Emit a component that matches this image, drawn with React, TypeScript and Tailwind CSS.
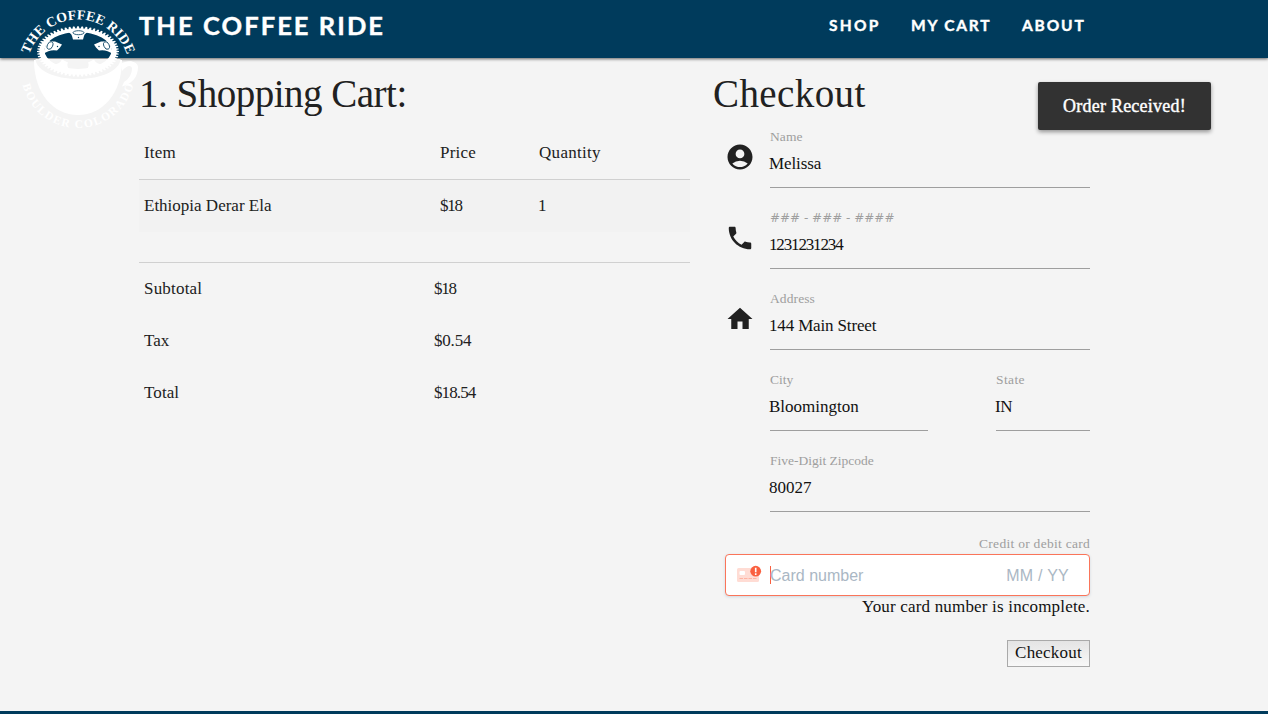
import type { ReactNode } from "react";
import { MdAccountCircle, MdPhone, MdHome } from "react-icons/md";

const serif = "font-['Liberation_Serif',serif]";

function Logo() {
  const count = 60;
  const teeth = Array.from({ length: count }, (_, i) => (i * 2 * Math.PI) / count);
  const ring = teeth
    .map((t) => {
      const pt = (a: number, rx: number, ry: number) =>
        `${(78 + rx * Math.cos(a)).toFixed(2)} ${(51.5 + ry * Math.sin(a)).toFixed(2)}`;
      return `L${pt(t - 0.04, 38.5, 23)} L${pt(t - 0.018, 41, 25.2)} L${pt(t + 0.018, 41, 25.2)} L${pt(t + 0.04, 38.5, 23)}`;
    })
    .join(" ")
    .replace("L", "M");
  return (
    <svg width="139" height="134" viewBox="0 0 139 134" className="block">
      <defs>
        <path id="arc-top" d="M26.500 71A51.500 51.500 0 0 1 129.500 71" />
        <path id="arc-bottom" d="M21 71A57 57 0 0 0 135 71" />
      </defs>
      <path d="M34 60C34 93 53 115 78 115C103 115 122 93 122 60Z" fill="#fff" />
      <path fillRule="evenodd" fill="#fff" d="M121 64C127 59 138 61 138 67C138 77 132 84 122 86.500L124 82C129 79 132 74 132 68C131 65 127 65 122 71Z" />
      <path d="M35.500 59H120.500C120 70 102 79 78 79C54 79 36 70 35.500 59Z" fill="#f4f4f4" />
      <path fillRule="evenodd" fill="#fff" d={`${ring}Z M44.500 50.500A33.500 18.500 0 0 0 111.500 50.500A33.500 18.500 0 0 0 44.500 50.500Z`} />
      <g fill="#fff">
        <path d="M65 31.500Q71 32 72 36L73 39.500H83L84 36Q85 32 91 31.500L78 29Z" />
        <path d="M47 40Q51 42 55 41.500L62 44.500L60 47.500L57 50.500Q50 49 43 54Z" />
        <path d="M109 40Q105 42 101 41.500L94 44.500L96 47.500L99 50.500Q106 49 113 54Z" />
        <path d="M52 65.500Q60 64 62 59.500L68 62.500Q66 66 70 70.500Z" />
        <path d="M104 65.500Q96 64 94 59.500L88 62.500Q90 66 86 70.500Z" />
      </g>
      <g fill="none" stroke="#003b5c" strokeWidth="0.8">
        <ellipse cx="78.500" cy="32.700" rx="5.500" ry="2" />
        <ellipse cx="50" cy="45.500" rx="2.600" ry="4" transform="rotate(25 50 45.500)" />
        <ellipse cx="106.500" cy="45.500" rx="2.600" ry="4" transform="rotate(-25 106.500 45.500)" />
      </g>
      <g fill="#003b5c">
        <circle cx="78.500" cy="37.500" r="0.700" />
        <circle cx="57.500" cy="46.500" r="0.700" />
        <circle cx="99" cy="46.500" r="0.700" />
      </g>
      <g className={`${serif} font-bold`} fill="#fff">
        <text fontSize="13.8">
          <textPath href="#arc-top" startOffset="17" textLength="128">THE COFFEE RIDE</textPath>
        </text>
        <text fontSize="11.5">
          <textPath href="#arc-bottom" startOffset="14" textLength="151">BOULDER COLORADO</textPath>
        </text>
      </g>
    </svg>
  );
}

type FieldProps = { label: string; value: string; valueClass?: string; labelClass?: string; className?: string };

function Field({ label, value, valueClass = "", labelClass = "", className = "" }: FieldProps) {
  return (
    <div className={`h-[58px] border-b border-[#9e9e9e] ${className}`}>
      <div className={`h-[14px] whitespace-nowrap text-[13.5px] leading-[14px] text-[#9e9e9e] ${labelClass}`}>{label}</div>
      <div className={`mt-[10px] -ml-px h-5 whitespace-nowrap text-[17px] leading-5 text-[#111] ${valueClass}`}>{value}</div>
    </div>
  );
}

function Row({ icon, children }: { icon?: ReactNode; children: ReactNode }) {
  return (
    <div className="mb-[23px] flex">
      <div className="w-[57px] pl-[11.5px] pt-[12px] text-[30px]">{icon}</div>
      <div className="flex w-[320px] justify-between">{children}</div>
    </div>
  );
}

const totals = [
  { name: "Subtotal", price: "$18", nameClass: "tracking-[0.2px]", priceClass: "tracking-[-1.2px]" },
  { name: "Tax", price: "$0.54", nameClass: "tracking-[0px]", priceClass: "tracking-[-0.2px]" },
  { name: "Total", price: "$18.54", nameClass: "tracking-[0.1px]", priceClass: "tracking-[-0.9px]" },
];

export default function App() {
  return (
    <div className={`relative flex h-[714px] w-[1268px] flex-col overflow-hidden bg-[#f4f4f4] text-[17px] text-[#212121] ${serif}`}>
      <header className="flex h-[58px] shrink-0 items-start bg-[#003b5c] pl-[139px] font-['Lato',sans-serif] font-bold text-white shadow-[0_1px_3px_rgba(0,0,0,0.6)]">
        <div className="w-[690px] whitespace-nowrap pt-[9px] text-[25.5px] leading-8 tracking-[2.05px] [-webkit-text-stroke:0.4px_white]">THE COFFEE RIDE</div>
        <nav className="flex whitespace-nowrap pt-[15px] text-[15.5px] leading-5 [-webkit-text-stroke:0.4px_white]">
          <span className="w-[82px] tracking-[2.3px]">SHOP</span>
          <span className="w-[111px] tracking-[1.8px]">MY CART</span>
          <span className="tracking-[1.85px]">ABOUT</span>
        </nav>
      </header>

      <main className="flex grow pl-[139px]">
        <section className="w-[551px]">
          <h1 className="h-[69px] whitespace-nowrap pt-[14px] text-[39px] leading-[44px] tracking-[-0.5px]">1. Shopping Cart:</h1>
          <div className="flex h-[53px] items-center border-b border-[#d0d0d0] pl-[5px]">
            <span className="w-[296px] tracking-[0.2px]">Item</span>
            <span className="w-[99px] tracking-[0.2px]">Price</span>
            <span className="tracking-[0.3px]">Quantity</span>
          </div>
          <div className="flex h-[52px] items-center bg-[#f2f2f2] pl-[5px]">
            <span className="w-[296px]">Ethiopia Derar Ela</span>
            <span className="w-[99px] tracking-[-1.2px]">$18</span>
            <span className="-ml-px">1</span>
          </div>
          <div className="mt-[30px] border-t border-[#d0d0d0]">
            {totals.map((t) => (
              <div key={t.name} className="flex h-[52px] items-center pl-[5px]">
                <span className={`w-[290px] ${t.nameClass}`}>{t.name}</span>
                <span className={t.priceClass}>{t.price}</span>
              </div>
            ))}
          </div>
        </section>

        <section className="ml-[23px] w-[377px]">
          <h1 className="h-[72px] whitespace-nowrap pt-[14px] text-[39px] leading-[44px] tracking-[0.4px]">Checkout</h1>
          <Row icon={<MdAccountCircle />}>
            <Field className="w-full" label="Name" value="Melissa" valueClass="tracking-[-0.1px]" labelClass="tracking-[0.1px]" />
          </Row>
          <Row icon={<MdPhone />}>
            <Field className="w-full" label="### - ### - ####" value="1231231234" valueClass="tracking-[-1.15px]" labelClass="font-['DejaVu_Sans',sans-serif] !text-[12px]" />
          </Row>
          <Row icon={<MdHome />}>
            <Field className="w-full" label="Address" value="144 Main Street" valueClass="tracking-[-0.15px]" labelClass="tracking-[0.1px]" />
          </Row>
          <Row>
            <Field className="w-[158px]" label="City" value="Bloomington" />
            <Field className="w-[94px]" label="State" value="IN" valueClass="tracking-[-0.3px]" labelClass="tracking-[0.4px]" />
          </Row>
          <Row>
            <Field className="w-full" label="Five-Digit Zipcode" value="80027" />
          </Row>
          <div className="mt-[25px] pl-[12px]">
            <div className="h-[17px] text-right text-[13.5px] leading-[14px] tracking-[0.28px] text-[#9e9e9e]">Credit or debit card</div>
            <div className="flex h-[42px] items-center rounded-[4px] border border-[#fa755a] bg-white pl-[11px] pr-5 font-['Liberation_Sans',sans-serif] text-[16px] text-[#aab7c4] shadow-[0_1px_3px_#cfd7df]">
              <svg width="25" height="20" viewBox="0 0 25 20" className="-mt-0.5 shrink-0">
                <rect y="4" width="22" height="14" rx="1.5" fill="#ffdcd4" />
                <rect x="2.5" y="7" width="5.5" height="4" rx="1" fill="#fff" />
                <path d="M2.5 14.5H20" stroke="#ffb3a2" strokeDasharray="3.5 1" />
                <circle cx="18.7" cy="7.2" r="5.4" fill="#fa6040" />
                <path d="M18.7 3.8V8.2M18.7 9.3V11" stroke="#fff" strokeWidth="1.6" />
              </svg>
              <div className="ml-2 h-[18px] w-px bg-[#fa6040]" />
              <span className="-ml-px mt-px grow">Card number</span>
              <span className="mt-px tracking-[0.25px]">MM / YY</span>
            </div>
            <div className="mt-[1px] h-[43px] text-right leading-5 tracking-[0.18px] text-[#111]">Your card number is incomplete.</div>
            <div className="flex justify-end">
              <button className="h-[27px] w-[83px] border border-[#a9a9a9] bg-gradient-to-b from-[#e4e4e4] to-[#f8f8f8] pb-0.5 text-[17px] leading-5 tracking-[0.2px] text-[#111]">Checkout</button>
            </div>
          </div>
        </section>
      </main>

      <footer className="h-[3px] shrink-0 bg-[#003b5c]" />

      <div className="absolute left-0 top-0">
        <Logo />
      </div>
      <div className="absolute left-[1038px] top-[82px] flex h-12 w-[173px] items-center justify-center rounded-[2px] bg-[#323232] text-[18px] tracking-[0.24px] text-white shadow-[0_2px_4px_rgba(0,0,0,0.4)] [-webkit-text-stroke:0.4px_white]">
        Order Received!
      </div>
    </div>
  );
}
